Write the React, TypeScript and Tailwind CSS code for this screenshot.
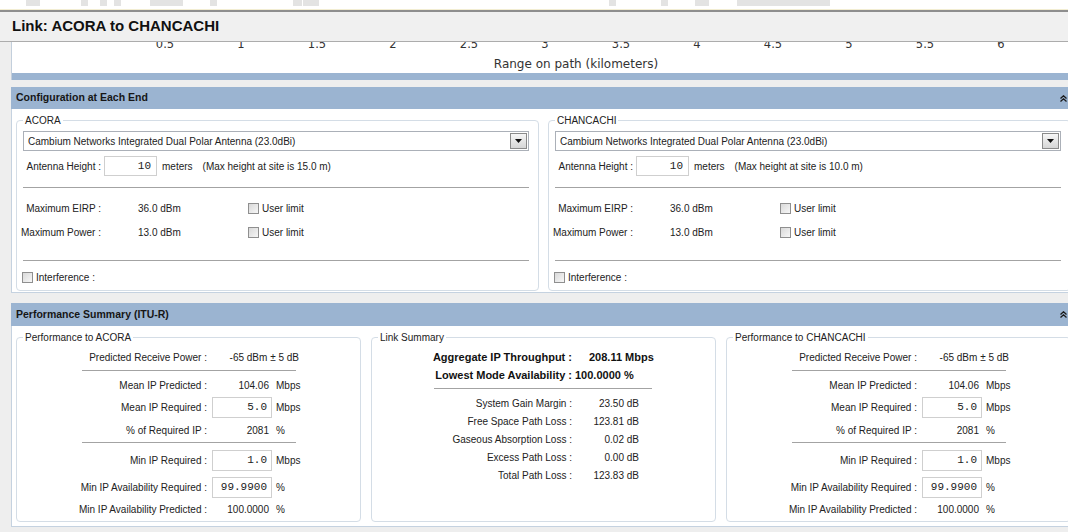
import React from 'react'

const ticks = [0.5, 1, 1.5, 2, 2.5, 3, 3.5, 4, 4.5, 5, 5.5, 6]

// bottom edge of the profile image that scrolled out of view
const ghostBlocks: [number, number][] = [
  [26, 14], [81, 7], [100, 7], [114, 7], [150, 33], [210, 7], [293, 9], [303, 16],
  [609, 7], [661, 7], [695, 14], [737, 93],
]

const losses = [
  ['System Gain Margin :', '23.50 dB'],
  ['Free Space Path Loss :', '123.81 dB'],
  ['Gaseous Absorption Loss :', '0.02 dB'],
  ['Excess Path Loss :', '0.00 dB'],
  ['Total Path Loss :', '123.83 dB'],
]

const mono = "font-['Liberation_Mono',monospace] text-[11px]"

function TopStrip() {
  return (
    <div className="h-[10px] bg-white border-b border-[#f2edd2]">
      <svg width="1068" height="9" className="block">
        {ghostBlocks.map(([x, w]) => (
          <rect key={x} x={x} y={0} width={w} height={6} fill="#e3e3e3" />
        ))}
      </svg>
    </div>
  )
}

// x axis of the path profile chart; the plot itself sits above the fold
function RangeAxis() {
  return (
    <svg width="1056" height="31" className="block" fontFamily="'DejaVu Sans', sans-serif" fill="#333">
      {ticks.map((t) => (
        <text key={t} x={77 + 152 * t} y={5.5} textAnchor="middle" fontSize="11.5">
          {t}
        </text>
      ))}
      <text x={564} y={26} textAnchor="middle" fontSize="12">
        Range on path (kilometers)
      </text>
    </svg>
  )
}

function Collapse() {
  return (
    <svg width="7" height="7" viewBox="0 0 7 7" fill="none" stroke="#1a1a1a" strokeWidth="1.3">
      <path d="M0.5 3.5 3.5 0.8 6.5 3.5M0.5 6.5 3.5 3.8 6.5 6.5" />
    </svg>
  )
}

function Section({ title, className, headerClass, children }: { title: string; className: string; headerClass: string; children: React.ReactNode }) {
  return (
    <div className={`ml-[11px] ${className}`}>
      <div className={`bg-[#9bb4d1] flex items-center justify-between pl-[5px] pr-px ${headerClass}`}>
        <span className="font-bold text-[10.5px] text-[#161616]">{title}</span>
        <Collapse />
      </div>
      <div className="bg-white border-l border-b border-[#c5d2e0] overflow-hidden">{children}</div>
    </div>
  )
}

function Check() {
  return <span className="inline-block shrink-0 w-[11px] h-[11px] border border-[#8f8f8f] bg-linear-to-br from-[#d9d9d9] to-[#f7f7f7]" />
}

function Rule({ className }: { className: string }) {
  return <div className={`h-px bg-[#a3a3a3] ${className}`} />
}

function LimitRow({ label, value, className }: { label: string; value: string; className: string }) {
  return (
    <div className={`h-[20px] flex items-center ml-[-6px] ${className}`}>
      <span className="w-[84px] text-right whitespace-nowrap">{label}</span>
      <span className="ml-[37px] w-[110px]">{value}</span>
      <Check />
      <span className="ml-[3px]">User limit</span>
    </div>
  )
}

function EndConfig({ name, maxHeight }: { name: string; maxHeight: string }) {
  return (
    <fieldset className="w-[523px] shrink-0 border border-[#d4dde6] rounded-[4px] pl-[6px] pr-[9px] pb-[4px]">
      <legend className="px-[2px] leading-[13px]">{name}</legend>
      <div className="mt-[4px] h-[20px] flex border border-[#abb0b8] bg-white">
        <span className="flex-1 flex items-center pl-[4px]">Cambium Networks Integrated Dual Polar Antenna (23.0dBi)</span>
        <span className="my-px mr-px w-[17px] border border-[#8a8a8a] bg-linear-to-b from-[#f6f6f6] to-[#d6d6d6] flex items-center justify-center">
          <svg width="7" height="4" viewBox="0 0 7 4">
            <path d="M0 0h7L3.5 4z" fill="#111" />
          </svg>
        </span>
      </div>
      <div className="mt-[5px] h-[20px] flex items-center">
        <span className="w-[78px] text-right whitespace-nowrap">Antenna Height :</span>
        <span className={`ml-[3px] w-[53px] h-full border border-[#cfcfcf] flex items-center justify-end pr-[5px] ${mono}`}>10</span>
        <span className="ml-[5px]">meters</span>
        <span className="ml-[10px]">(Max height at site is {maxHeight} m)</span>
      </div>
      <Rule className="mt-[11px]" />
      <LimitRow label="Maximum EIRP :" value="36.0 dBm" className="mt-[10px]" />
      <LimitRow label="Maximum Power :" value="13.0 dBm" className="mt-[4px]" />
      <Rule className="mt-[18px]" />
      <div className="mt-[7px] h-[18px] flex items-center ml-[-1px]">
        <Check />
        <span className="ml-[3px]">Interference :</span>
      </div>
    </fieldset>
  )
}

function Metric({ label, value, input, unit, className }: { label: string; value?: string; input?: string; unit: string; className: string }) {
  return (
    <div className={`flex items-center ${className}`}>
      <span className="w-[184px] text-right whitespace-nowrap">{label}</span>
      {input ? (
        <span className={`ml-[5px] w-[60px] h-[21px] border border-[#cfcfcf] flex items-center justify-end pr-[4px] ${mono}`}>{input}</span>
      ) : (
        <span className="ml-[5px] w-[60px] text-right pr-[3px]">{value}</span>
      )}
      <span className="ml-[4px]">{unit}</span>
    </div>
  )
}

function EndPerformance({ name }: { name: string }) {
  return (
    <fieldset className="w-[345px] shrink-0 border border-[#d4dde6] rounded-[4px] px-[6px] pb-[2px]">
      <legend className="px-[2px] leading-[13px]">Performance to {name}</legend>
      <div className="mt-[4px] h-[18px] flex items-center">
        <span className="w-[184px] text-right">Predicted Receive Power :</span>
        <span className="ml-[5px] w-[87px] text-right">-65 dBm ± 5 dB</span>
      </div>
      <Rule className="mt-[4px] ml-[59px] w-[214px]" />
      <Metric label="Mean IP Predicted :" value="104.06" unit="Mbps" className="mt-[4px] h-[20px]" />
      <Metric label="Mean IP Required :" input="5.0" unit="Mbps" className="mt-px h-[23px]" />
      <Metric label="% of Required IP :" value="2081" unit="%" className="mt-px h-[21px]" />
      <Rule className="mt-px ml-[59px] w-[214px]" />
      <Metric label="Min IP Required :" input="1.0" unit="Mbps" className="mt-[6px] h-[22px]" />
      <Metric label="Min IP Availability Required :" input="99.9900" unit="%" className="mt-[5px] h-[22px]" />
      <Metric label="Min IP Availability Predicted :" value="100.0000" unit="%" className="mt-px h-[20px]" />
    </fieldset>
  )
}

function LinkSummary() {
  return (
    <fieldset className="w-[345px] shrink-0 border border-[#d4dde6] rounded-[4px] px-[6px] pb-[2px]">
      <legend className="px-[2px] leading-[13px]">Link Summary</legend>
      <div className="mt-[4px] h-[18px] flex items-center font-bold text-[11px] text-[#111]">
        <span className="w-[194px] text-right">Aggregate IP Throughput :</span>
        <span className="pl-[17px]">208.11 Mbps</span>
      </div>
      <div className="h-[18px] flex items-center font-bold text-[11px] text-[#111]">
        <span className="w-[194px] text-right">Lowest Mode Availability :</span>
        <span className="pl-[3px]">100.0000 %</span>
      </div>
      <Rule className="mt-[4px] ml-[56px] w-[218px]" />
      <div className="mt-[5px]">
        {losses.map(([label, value]) => (
          <div key={label} className="h-[18px] flex items-center">
            <span className="w-[194px] text-right">{label}</span>
            <span className="w-[67px] text-right">{value}</span>
          </div>
        ))}
      </div>
    </fieldset>
  )
}

export default function App() {
  return (
    <div className="w-[1068px] h-[532px] overflow-hidden bg-[#eeeeee] font-['Liberation_Sans',Arial,sans-serif] text-[10px] text-[#222]">
      <TopStrip />
      <div className="h-[2px] bg-[#8e8e8e]" />
      <div className="h-[29px] flex items-center pl-[12px] pb-[1px] bg-[#f0f0f0] text-[15px] font-bold text-[#111]">
        Link: ACORA to CHANCACHI
      </div>
      <div className="h-px bg-[#acacac]" />
      <div className="ml-[11px] border-l border-[#c3cfdc] bg-white">
        <RangeAxis />
        <div className="h-[7px] bg-[#9bb4d1]" />
      </div>

      <Section title="Configuration at Each End" className="mt-[7px]" headerClass="h-[22px]">
        <div className="flex gap-[9px] pt-[5px] pb-px pl-[4px]">
          <EndConfig name="ACORA" maxHeight="15.0" />
          <EndConfig name="CHANCACHI" maxHeight="10.0" />
        </div>
      </Section>

      <Section title="Performance Summary (ITU-R)" className="mt-[10px]" headerClass="h-[23px]">
        <div className="flex gap-[10px] pt-[5px] pb-[4px] pl-[4px]">
          <EndPerformance name="ACORA" />
          <LinkSummary />
          <EndPerformance name="CHANCACHI" />
        </div>
      </Section>
    </div>
  )
}
